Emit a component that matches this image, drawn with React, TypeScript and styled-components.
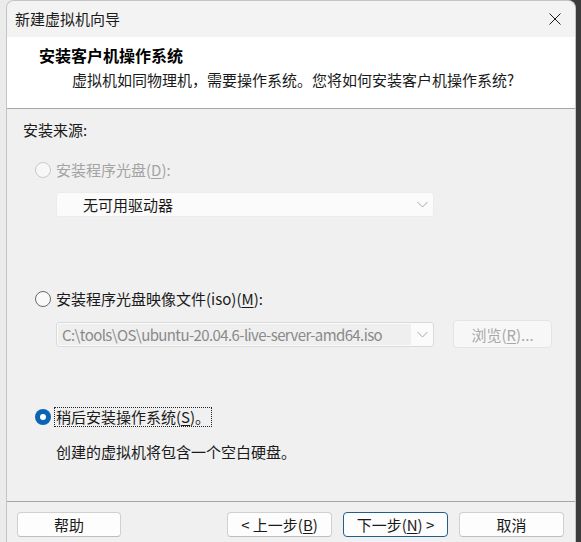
import React from "react";
import styled, { createGlobalStyle, css } from "styled-components";

const Global = createGlobalStyle`
  html, body { margin: 0; padding: 0; }
  body {
    font-family: "Noto Sans CJK SC", "Noto Sans", sans-serif;
    background: #ebebeb;
  }
  #root { width: 581px; height: 542px; }
`;

const Screen = styled.div`
  width: 581px;
  height: 542px;
  overflow: hidden;
  box-sizing: border-box;
  padding-left: 6px;
  display: flex;
  background: linear-gradient(to right, #ebebeb 0 560px, #3b3b3b 560px);
`;

const Window = styled.div`
  width: 570px;
  height: 542px;
  flex: none;
  box-sizing: border-box;
  display: flex;
  flex-direction: column;
  border: 1px solid #c4c4c4;
  border-bottom: none;
  border-radius: 8px 8px 0 0;
  overflow: hidden;
  background: #f0f0f0;
`;

const TitleBar = styled.div`
  height: 36px;
  flex: none;
  display: flex;
  align-items: center;
  justify-content: space-between;
  padding-left: 8px;
  background: #f3f3f3;
`;

const TitleText = styled.span`
  font-size: 15px;
  line-height: 20px;
  color: #1b1b1b;
`;

const CloseButton = styled.div`
  width: 40px;
  height: 36px;
  display: flex;
  align-items: center;
  justify-content: center;
`;

const Header = styled.div`
  height: 72px;
  flex: none;
  box-sizing: border-box;
  background: #ffffff;
  border-bottom: 1px solid #a8a8a8;
  padding: 8px 0 0 32px;
`;

const HeaderTitle = styled.div`
  font-size: 16px;
  font-weight: 700;
  line-height: 20px;
  color: #000;
`;

const HeaderSub = styled.div`
  font-size: 15px;
  line-height: 20px;
  margin-top: 5px;
  padding-left: 33px;
  color: #1a1a1a;
`;

const Body = styled.div`
  flex: 1;
  display: flex;
  flex-direction: column;
  align-items: flex-start;
  padding: 11px 0 0 16px;
`;

const Text = styled.div<{ $indent?: number; $top?: number }>`
  font-size: 15px;
  line-height: 20px;
  color: #1a1a1a;
  margin-left: ${(p) => p.$indent ?? 0}px;
  margin-top: ${(p) => p.$top ?? 0}px;
`;

const RadioRow = styled.div<{ $top: number }>`
  display: flex;
  align-items: center;
  gap: 4px;
  height: 20px;
  margin-left: 12px;
  margin-top: ${(p) => p.$top}px;
`;

const Radio = styled.span<{ $state: "disabled" | "off" | "on" }>`
  width: 16px;
  height: 16px;
  box-sizing: border-box;
  border-radius: 50%;
  flex: none;
  display: flex;
  align-items: center;
  justify-content: center;
  ${(p) =>
    p.$state === "disabled"
      ? css`
          border: 1px solid #c8c8c8;
          background: #f7f7f7;
        `
      : p.$state === "off"
      ? css`
          border: 1px solid #6a6a6a;
          background: #f9f9f9;
        `
      : css`
          background: #0a64b4;
          &::after {
            content: "";
            width: 6px;
            height: 6px;
            border-radius: 50%;
            background: #fff;
          }
        `}
`;

const RadioLabel = styled.span<{ $disabled?: boolean; $focus?: boolean }>`
  font-size: 15px;
  line-height: 18px;
  color: ${(p) => (p.$disabled ? "#a3a3a3" : "#1a1a1a")};
  padding: 0 1px;
  ${(p) =>
    p.$focus &&
    css`
      outline: 1px dotted #222;
      outline-offset: 0;
    `}
`;

const U = styled.span`
  text-decoration: underline;
  text-underline-offset: 2px;
`;

const Dropdown = styled.div`
  margin-left: 33px;
  margin-top: 12px;
  width: 378px;
  height: 25px;
  box-sizing: border-box;
  display: flex;
  align-items: center;
  background: #fbfbfb;
  border: 1px solid #ececec;
  border-radius: 3px;
  padding: 0 5px 0 26px;
  font-size: 15px;
  color: #1a1a1a;
`;

const Chevron = styled.svg`
  margin-left: auto;
  flex: none;
`;

const ComboRow = styled.div`
  display: flex;
  align-items: center;
  gap: 19px;
  margin-left: 33px;
  margin-top: 11px;
`;

const Combo = styled.div`
  width: 378px;
  height: 25px;
  box-sizing: border-box;
  display: flex;
  align-items: center;
  background: #fbfbfb;
  border: 1px solid #dadada;
  border-radius: 3px;
  padding: 1px 5px 1px 1px;
`;

const ComboField = styled.div`
  width: 353px;
  height: 100%;
  box-sizing: border-box;
  background: #efefef;
  padding-left: 4px;
  font-size: 15px;
  line-height: 21px;
  letter-spacing: -0.6px;
  color: #8a8a8a;
  white-space: nowrap;
  overflow: hidden;
`;

const Button = styled.div<{ $primary?: boolean; $disabled?: boolean; $w?: number; $h?: number }>`
  width: ${(p) => p.$w ?? 105}px;
  height: ${(p) => p.$h ?? 25}px;
  box-sizing: border-box;
  display: flex;
  align-items: center;
  justify-content: center;
  border-radius: 4px;
  font-size: 15px;
  white-space: nowrap;
  ${(p) =>
    p.$disabled
      ? css`
          background: #f7f7f7;
          border: 1px solid #e4e4e4;
          color: #a8a8a8;
        `
      : p.$primary
      ? css`
          background: #fdfdfd;
          border: 1px solid #1f5f8c;
          color: #1a1a1a;
        `
      : css`
          background: #fdfdfd;
          border: 1px solid #d0d0d0;
          border-bottom-color: #bcbcbc;
          color: #1a1a1a;
        `}
`;

const Footer = styled.div`
  flex: none;
  border-top: 1px solid #a6a6a6;
  padding: 10px 11px 5px 10px;
  display: flex;
  justify-content: space-between;
`;

const ButtonGroup = styled.div`
  display: flex;
  gap: 11px;
`;

const ChevronIcon = () => (
  <Chevron width="11" height="7" viewBox="0 0 11 7">
    <path d="M0.5 1 L5.5 6 L10.5 1" fill="none" stroke="#a8a8a8" strokeWidth="1" />
  </Chevron>
);

export default function App() {
  return (
    <>
      <Global />
      <Screen>
        <Window>
          <TitleBar>
            <TitleText>新建虚拟机向导</TitleText>
            <CloseButton>
              <svg width="12" height="12" viewBox="0 0 12 12">
                <path d="M0.5 0.5 L11.5 11.5 M11.5 0.5 L0.5 11.5" stroke="#1a1a1a" strokeWidth="1" fill="none" />
              </svg>
            </CloseButton>
          </TitleBar>
          <Header>
            <HeaderTitle>安装客户机操作系统</HeaderTitle>
            <HeaderSub>虚拟机如同物理机，需要操作系统。您将如何安装客户机操作系统?</HeaderSub>
          </Header>
          <Body>
            <Text>安装来源:</Text>
            <RadioRow $top={20}>
              <Radio $state="disabled" />
              <RadioLabel $disabled>
                安装程序光盘(<U>D</U>):
              </RadioLabel>
            </RadioRow>
            <Dropdown>
              无可用驱动器
              <ChevronIcon />
            </Dropdown>
            <RadioRow $top={72}>
              <Radio $state="off" />
              <RadioLabel>
                安装程序光盘映像文件(iso)(<U>M</U>):
              </RadioLabel>
            </RadioRow>
            <ComboRow>
              <Combo>
                <ComboField>C:\tools\OS\ubuntu-20.04.6-live-server-amd64.iso</ComboField>
                <ChevronIcon />
              </Combo>
              <Button $disabled $w={99} $h={28}>
                浏览(<U>R</U>)...
              </Button>
            </ComboRow>
            <RadioRow $top={59}>
              <Radio $state="on" />
              <RadioLabel $focus>
                稍后安装操作系统(<U>S</U>)。
              </RadioLabel>
            </RadioRow>
            <Text $indent={33} $top={15}>
              创建的虚拟机将包含一个空白硬盘。
            </Text>
          </Body>
          <Footer>
            <Button $w={104}>帮助</Button>
            <ButtonGroup>
              <Button>
                &lt; 上一步(<U>B</U>)
              </Button>
              <Button $primary>
                下一步(<U>N</U>) &gt;
              </Button>
              <Button>取消</Button>
            </ButtonGroup>
          </Footer>
        </Window>
      </Screen>
    </>
  );
}
